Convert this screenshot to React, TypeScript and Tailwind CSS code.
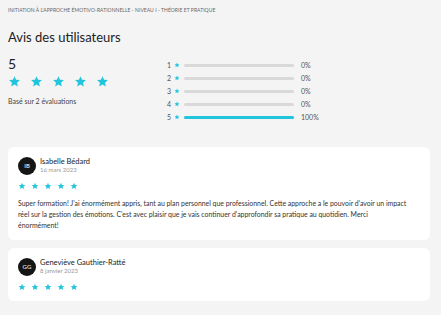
import { FC } from 'react';

const Star: FC<{ className?: string }> = ({ className }) => (
  <svg viewBox="0 0 24 24" className={className} fill="currentColor">
    <path d="M12 2.2l2.9 6.6 7.1.6-5.4 4.7 1.6 7-6.2-3.7-6.2 3.7 1.6-7L2 9.4l7.1-.6z" />
  </svg>
);

const distribution = [
  { n: 1, pct: 0 },
  { n: 2, pct: 0 },
  { n: 3, pct: 0 },
  { n: 4, pct: 0 },
  { n: 5, pct: 100 },
];

const reviews = [
  {
    initials: 'IB',
    name: 'Isabelle Bédard',
    date: '16 mars 2023',
    text: "Super formation! J'ai énormément appris, tant au plan personnel que professionnel. Cette approche a le pouvoir d'avoir un impact réel sur la gestion des émotions. C'est avec plaisir que je vais continuer d'approfondir sa pratique au quotidien. Merci énormément!",
  },
  {
    initials: 'GG',
    name: 'Geneviève Gauthier-Ratté',
    date: '8 janvier 2023',
    text: '',
  },
];

const App: FC = () => {
  return (
    <div className="w-[441px] h-[315px] bg-[#f4f4f4] overflow-hidden font-['Lato',sans-serif] text-[#222]">
      <div className="px-2 pt-[7px]">
        <div className="text-[5px] uppercase tracking-[0.01em] text-[#666]">
          Initiation à l'approche émotivo-rationnelle - Niveau I - Théorie et pratique
        </div>
        <h2 className="mt-[14px] text-[13px] leading-[16px] text-[#222]">Avis des utilisateurs</h2>

        <div className="flex mt-[11px]">
          <div className="w-[159px]">
            <div className="text-[14px] leading-[16px]">5</div>
            <div className="flex gap-[9px] mt-[3px]">
              {[0, 1, 2, 3, 4].map(i => (
                <Star key={i} className="w-[13px] h-[13px] text-[#22c5dc]" />
              ))}
            </div>
            <div className="mt-[8px] text-[7px] text-[#444]">Basé sur 2 évaluations</div>
          </div>

          <div className="flex flex-col gap-[4px] pt-[5px]">
            {distribution.map(d => (
              <div key={d.n} className="flex items-center h-[9px]">
                <span className="text-[7px] text-[#555] w-[7px]">{d.n}</span>
                <Star className="w-[6px] h-[6px] text-[#22c5dc]" />
                <div className="ml-[4px] w-[110px] h-[3px] rounded-full bg-[#d9d9d9]">
                  <div className="h-[3px] rounded-full bg-[#22c5dc]" style={{ width: `${d.pct}%` }} />
                </div>
                <span className="ml-[7px] text-[7px] text-[#555]">{d.pct}%</span>
              </div>
            ))}
          </div>
        </div>

        <div className="flex flex-col gap-[8px] mt-[25px]">
          {reviews.map(r => (
            <div
              key={r.name}
              className={`bg-white rounded-[6px] px-[10px] pt-[10px] w-[422px] ${r.text ? 'pb-[9px]' : 'pb-[10px]'}`}
            >
              <div className="flex items-center gap-[4px]">
                <div className="w-[18px] h-[18px] rounded-full bg-[#151515] text-white text-[6px] flex items-center justify-center">
                  {r.initials}
                </div>
                <div>
                  <div className="text-[7.5px] leading-[9px] text-[#222]">{r.name}</div>
                  <div className="text-[6px] leading-[8px] text-[#999]">{r.date}</div>
                </div>
              </div>
              <div className="flex gap-[5px] mt-[7px]">
                {[0, 1, 2, 3, 4].map(i => (
                  <Star key={i} className="w-[8px] h-[8px] text-[#22c5dc]" />
                ))}
              </div>
              {r.text && (
                <p className="mt-[8px] w-[392px] text-[6.9px] leading-[11px] text-[#333]">{r.text}</p>
              )}
            </div>
          ))}
        </div>
      </div>
    </div>
  );
};

export default App;
